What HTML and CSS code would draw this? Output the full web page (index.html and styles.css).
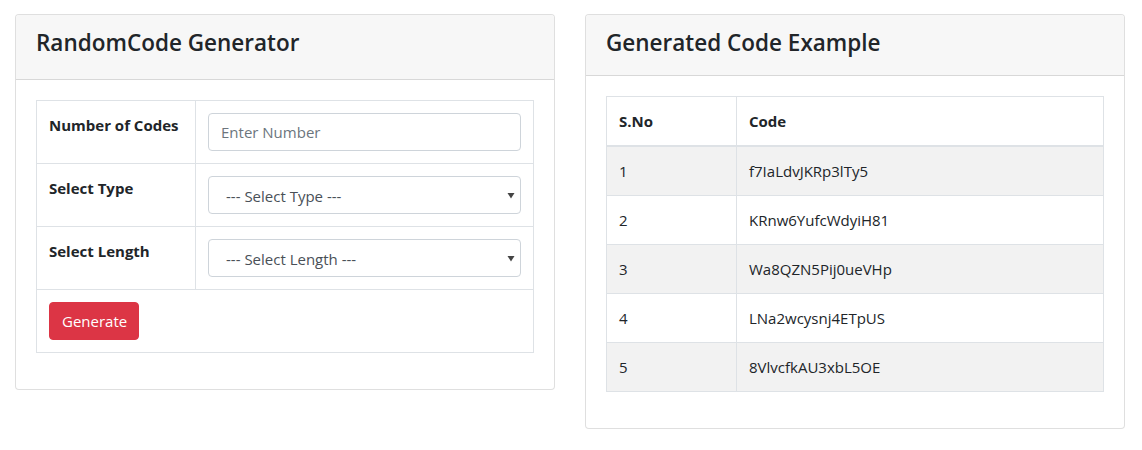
FILE: index.html
```html
<!DOCTYPE html>
<html lang="en">
<head>
<meta charset="utf-8">
<title>RandomCode Generator</title>
<link rel="stylesheet" href="styles.css">
</head>
<body>
<div class="page">
  <div class="card card-form">
    <div class="card-header"><h4 class="card-title">RandomCode Generator</h4></div>
    <div class="card-body">
      <table class="tbl form-tbl">
        <tr>
          <th class="lbl">Number of Codes</th>
          <td><input class="form-control" type="text" placeholder="Enter Number"></td>
        </tr>
        <tr>
          <th class="lbl">Select Type</th>
          <td>
            <div class="select-wrap">
              <select class="form-control select"><option>--- Select Type ---</option></select>
              <svg class="caret" width="8" height="8" viewBox="0 0 8 8"><path d="M0.5 2 L7.5 2 L4 7.5 Z" fill="#444"/></svg>
            </div>
          </td>
        </tr>
        <tr>
          <th class="lbl">Select Length</th>
          <td>
            <div class="select-wrap">
              <select class="form-control select"><option>--- Select Length ---</option></select>
              <svg class="caret" width="8" height="8" viewBox="0 0 8 8"><path d="M0.5 2 L7.5 2 L4 7.5 Z" fill="#444"/></svg>
            </div>
          </td>
        </tr>
        <tr>
          <td colspan="2"><button class="btn btn-danger" type="button">Generate</button></td>
        </tr>
      </table>
    </div>
  </div>
  <div class="card card-example">
    <div class="card-header"><h4 class="card-title">Generated Code Example</h4></div>
    <div class="card-body">
      <table class="tbl code-tbl">
        <thead>
          <tr><th class="col-no">S.No</th><th>Code</th></tr>
        </thead>
        <tbody>
          <tr class="odd"><td>1</td><td>f7IaLdvJKRp3lTy5</td></tr>
          <tr><td>2</td><td>KRnw6YufcWdyiH81</td></tr>
          <tr class="odd"><td>3</td><td>Wa8QZN5Pij0ueVHp</td></tr>
          <tr><td>4</td><td>LNa2wcysnj4ETpUS</td></tr>
          <tr class="odd"><td>5</td><td>8VlvcfkAU3xbL5OE</td></tr>
        </tbody>
      </table>
    </div>
  </div>
</div>
</body>
</html>
```

FILE: styles.css
```css
* { box-sizing: border-box; }
html, body { margin: 0; padding: 0; background: #fff; }
body {
  font-family: "Open Sans", "Noto Sans", "Liberation Sans", sans-serif;
  font-size: 15px;
  line-height: 24px;
  color: #212529;
}
.page {
  display: flex;
  align-items: flex-start;
  gap: 30px;
  padding: 14px 0 0 15px;
}
.card {
  width: 540px;
  background: #fff;
  border: 1px solid rgba(0,0,0,.125);
  border-radius: 4px;
}
.card-header {
  background: #f7f7f7;
  border-bottom: 1px solid rgba(0,0,0,.125);
  border-radius: 3px 3px 0 0;
  padding: 0 20px;
  display: flex;
  align-items: center;
}
.card-form .card-header { height: 65px; padding-bottom: 9px; }
.card-example .card-header { height: 61px; padding-bottom: 4px; }
.card-title {
  margin: 0;
  font-size: 22.5px;
  font-weight: 600;
  line-height: 28px;
  color: #212529;
}
.card-body { padding: 20px 20px 36px; }
.tbl {
  width: 100%;
  border-collapse: collapse;
}
.tbl th, .tbl td {
  border: 1px solid #dee2e6;
  padding: 12px;
  text-align: left;
  vertical-align: top;
}
.tbl th { font-weight: 700; }
.form-tbl .lbl { width: 159px; padding-top: 12px; }
.form-tbl tr { height: 63px; }
.form-control {
  display: block;
  width: 100%;
  height: 38px;
  padding: 6px 12px;
  font-family: inherit;
  font-size: 15px;
  line-height: 24px;
  color: #495057;
  background: #fff;
  border: 1px solid #ced4da;
  border-radius: 4px;
  outline: none;
}
.form-control::placeholder { color: #6c757d; opacity: 1; }
.select-wrap { position: relative; }
.select {
  -webkit-appearance: none;
  appearance: none;
  padding-left: 17px;
  padding-top: 7px;
}
.caret {
  position: absolute;
  right: 6px;
  top: 15px;
  pointer-events: none;
}
.btn {
  font-family: inherit;
  font-size: 15px;
  line-height: 24px;
  padding: 6px 12px;
  border-radius: 4px;
  border: 1px solid transparent;
  height: 38px;
  width: 90px;
}
.btn-danger { background: #dc3545; border-color: #dc3545; color: #fff; }
.code-tbl th, .code-tbl td { vertical-align: middle; }
.code-tbl thead th {
  border-bottom: 2px solid #dee2e6;
  height: 49px;
  padding-top: 12px;
  padding-bottom: 11px;
}
.code-tbl .col-no { width: 130px; }
.code-tbl tbody td { height: 49px; padding-top: 12px; padding-bottom: 12px; }
.code-tbl tr.odd td { background: #f2f2f2; }
```
